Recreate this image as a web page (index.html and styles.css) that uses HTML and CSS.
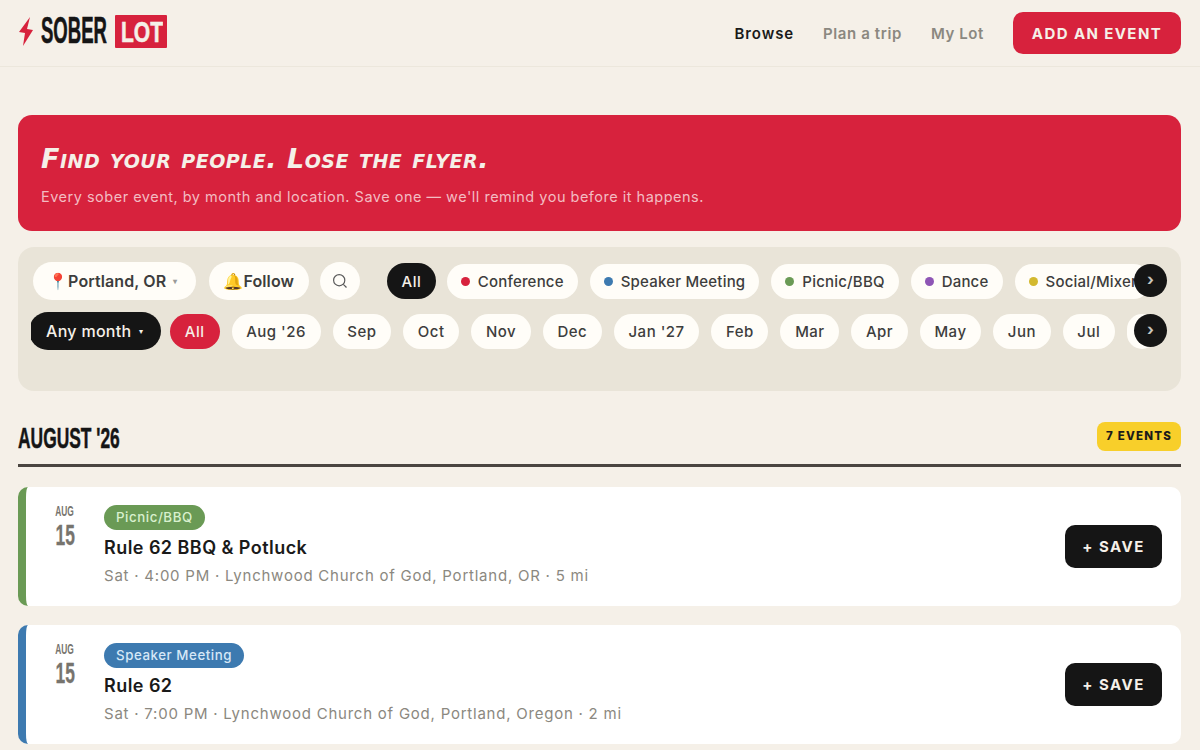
FILE: index.html
```html
<!DOCTYPE html>
<html lang="en">
<head>
    <meta charset="UTF-8">
    <title>Sober Lot</title>
    <link rel="stylesheet" href="styles.css">
</head>
<body>
    <header class="topbar">
        <a class="logo">
            <svg class="bolt" width="16" height="30" viewBox="0 0 16 30"><path d="M12 1 L1 16 L7 17 L5 30 L15 14 L9 13 Z" fill="#d7223d"/></svg>
            <span class="logo-word"><span>SOBER</span></span>
            <span class="logo-box"><span>LOT</span></span>
        </a>
        <nav class="nav">
            <a class="active">Browse</a>
            <a>Plan a trip</a>
            <a>My Lot</a>
            <button class="add-btn">ADD AN EVENT</button>
        </nav>
    </header>

    <main class="page">
        <section class="hero">
            <h1>Find your people. Lose the flyer.</h1>
            <p>Every sober event, by month and location. Save one — we'll remind you before it happens.</p>
        </section>

        <section class="filters">
            <div class="filter-row">
                <div class="chips">
                    <span class="chip big place">📍Portland, OR <i class="caret">▾</i></span>
                    <span class="chip big follow">🔔Follow</span>
                    <span class="chip round">
                        <svg width="16" height="16" viewBox="0 0 16 16" fill="none" stroke="#5a5a5a" stroke-width="1.2"><circle cx="7.2" cy="7.2" r="5.6"/><path d="M11.3 11.3 L14.5 14.5"/></svg>
                    </span>
                    <span class="chip dark cat-all">All</span>
                    <span class="chip cat"><b class="dot red"></b>Conference</span>
                    <span class="chip cat"><b class="dot blue"></b>Speaker Meeting</span>
                    <span class="chip cat"><b class="dot green"></b>Picnic/BBQ</span>
                    <span class="chip cat"><b class="dot purple"></b>Dance</span>
                    <span class="chip cat"><b class="dot yellow"></b>Social/Mixer</span>
                </div>
                <button class="arrow">›</button>
            </div>
            <div class="filter-row">
                <div class="chips months">
                    <span class="chip dark any">Any month <i class="caret">▾</i></span>
                    <span class="chip red-chip">All</span>
                    <span class="chip">Aug '26</span>
                    <span class="chip">Sep</span>
                    <span class="chip">Oct</span>
                    <span class="chip">Nov</span>
                    <span class="chip">Dec</span>
                    <span class="chip">Jan '27</span>
                    <span class="chip">Feb</span>
                    <span class="chip">Mar</span>
                    <span class="chip">Apr</span>
                    <span class="chip">May</span>
                    <span class="chip">Jun</span>
                    <span class="chip">Jul</span>
                    <span class="chip stub"></span>
                </div>
                <button class="arrow">›</button>
            </div>
        </section>

        <div class="month-head">
            <h2><span>AUGUST '26</span></h2>
            <span class="count">7 EVENTS</span>
        </div>

        <article class="event green-edge">
            <div class="date"><span class="mon">AUG</span><span class="day">15</span></div>
            <div class="info">
                <span class="tag tag-green">Picnic/BBQ</span>
                <h3>Rule 62 BBQ &amp; Potluck</h3>
                <p>Sat · 4:00 PM · Lynchwood Church of God, Portland, OR · 5 mi</p>
            </div>
            <button class="save">+ SAVE</button>
        </article>

        <article class="event blue-edge">
            <div class="date"><span class="mon">AUG</span><span class="day">15</span></div>
            <div class="info">
                <span class="tag tag-blue">Speaker Meeting</span>
                <h3>Rule 62</h3>
                <p>Sat · 7:00 PM · Lynchwood Church of God, Portland, Oregon · 2 mi</p>
            </div>
            <button class="save">+ SAVE</button>
        </article>
    </main>
</body>
</html>
```

FILE: styles.css
```css
html, body {
    margin: 0;
    padding: 0;
    background: #f5f0e8;
    font-family: Inter, "Liberation Sans", sans-serif;
    color: #1a1a1a;
    height: 750px;
    overflow: hidden;
}
.topbar {
    display: flex;
    justify-content: space-between;
    align-items: center;
    height: 66px;
    padding: 0 19px 0 18px;
    border-bottom: 1px solid #ece7dc;
}
.logo {
    display: flex;
    align-items: center;
    height: 34px;
    margin-top: -4px;
}
.bolt {
    margin-right: 7px;
}
.logo-word, .logo-box {
    display: block;
    font-family: "Liberation Sans", sans-serif;
    font-weight: 700;
    font-size: 36px;
    line-height: 34px;
    -webkit-text-stroke: 0.6px currentColor;
}
.logo-word span, .logo-box span, .month-head h2 span {
    display: inline-block;
    white-space: nowrap;
    transform-origin: left center;
}
.logo-word {
    width: 68px;
    color: #151515;
    margin-right: 6px;
}
.logo-word span {
    transform: scaleX(0.515);
}
.logo-box {
    background: #d7223d;
    color: #f5f0e8;
    width: 52px;
    height: 33px;
    padding-left: 6px;
    box-sizing: border-box;
    font-size: 30px;
    line-height: 34px;
    border-radius: 1px;
}
.logo-box span {
    transform: scaleX(0.7);
}
.nav {
    display: flex;
    align-items: center;
    font-size: 15px;
    font-weight: 600;
    letter-spacing: 0.6px;
    color: #8b8880;
}
.nav a {
    margin-right: 29px;
}
.nav a.active {
    color: #1a1a1a;
    letter-spacing: 0.9px;
}
.add-btn {
    background: #d7223d;
    color: #f5f0e8;
    border: none;
    border-radius: 10px;
    height: 42px;
    width: 168px;
    font-family: inherit;
    font-size: 15px;
    font-weight: 700;
    letter-spacing: 1.4px;
}
.page {
    padding: 48px 19px 0 18px;
}
.hero {
    background: #d7223d;
    border-radius: 14px;
    height: 116px;
    padding: 28px 23px 0;
    box-sizing: border-box;
    color: #f5f0e8;
}
.hero h1 {
    margin: 0;
    font-family: "DejaVu Sans", sans-serif;
    font-style: italic;
    font-variant: small-caps;
    font-size: 27px;
    line-height: 32px;
    font-weight: 700;
    letter-spacing: 0.5px;
}
.hero p {
    margin: 12px 0 0;
    font-size: 14.5px;
    line-height: 20px;
    letter-spacing: 0.5px;
    color: #f3bcc2;
}
.filters {
    margin-top: 16px;
    background: #e9e4d8;
    border-radius: 16px;
    height: 144px;
    padding: 15px 13px 0 13px;
    box-sizing: border-box;
}
.filter-row {
    position: relative;
    height: 38px;
    margin-bottom: 12px;
}
.chips {
    display: flex;
    align-items: center;
    gap: 12px;
    height: 38px;
    overflow: hidden;
    width: 1136px;
}
.chip {
    flex: none;
    display: flex;
    align-items: center;
    box-sizing: border-box;
    height: 35px;
    padding: 0 14.65px;
    background: #fffdf8;
    border-radius: 18px;
    font-size: 15px;
    font-weight: 500;
    color: #3d3d3d;
    white-space: nowrap;
    letter-spacing: 0.5px;
}
.chip.stub {
    width: 30px;
}
.chip.cat {
    font-size: 15px;
    letter-spacing: 0.2px;
    padding: 0 14px;
}
.chip.big {
    height: 38px;
    border-radius: 19px;
    font-size: 16px;
    font-weight: 600;
    letter-spacing: 0.1px;
}
.chip.place {
    margin-left: 2px;
    padding: 0 19px 0 15px;
}
.chip.follow {
    margin-left: 1px;
    padding: 0 15px 0 14px;
}
.chip.round {
    width: 40px;
    height: 38px;
    margin-left: -1px;
    border-radius: 50%;
    justify-content: center;
    padding: 0;
}
.chip.dark {
    background: #151515;
    color: #f5f0e8;
}
.cat-all {
    margin-left: 15px;
    margin-right: -1px;
    height: 36px;
    border-radius: 18px;
    padding: 0 14.5px;
}
.chip.any {
    height: 38px;
    border-radius: 19px;
    font-size: 16px;
    letter-spacing: 0.3px;
    padding: 0 17px;
    margin-left: -2px;
    margin-right: -3px;
}
.chip.red-chip {
    background: #d7223d;
    color: #f5f0e8;
    padding: 0 15px;
}
.caret {
    font-style: normal;
    font-size: 8px;
    margin-left: 7px;
    color: #9a9a9a;
}
.any .caret {
    color: #f5f0e8;
    margin-left: 8px;
}
.dot {
    width: 9px;
    height: 9px;
    border-radius: 50%;
    margin-right: 8px;
}
.dot.red { background: #d7223d; }
.dot.blue { background: #3d7ab0; }
.dot.green { background: #6a9a55; }
.dot.purple { background: #8e55b5; }
.dot.yellow { background: #d3b92f; }
.arrow {
    position: absolute;
    right: 1px;
    top: 2px;
    width: 33px;
    height: 33px;
    border: none;
    border-radius: 50%;
    background: #151515;
    color: #c9c6bf;
    font-family: inherit;
    font-size: 16px;
    font-weight: 700;
    line-height: 28px;
    padding: 0 0 3px;
}
.month-head {
    display: flex;
    justify-content: space-between;
    align-items: center;
    margin-top: 31px;
    height: 42px;
    border-bottom: 3px solid #4a4540;
}
.month-head h2 {
    margin: 0;
    font-family: "Liberation Sans", sans-serif;
    font-size: 29px;
    font-weight: 700;
    color: #151515;
    -webkit-text-stroke: 0.5px currentColor;
    margin-top: -10px;
}
.month-head h2 span {
    transform: scaleX(0.6);
}
.count {
    background: #f8cf2a;
    border-radius: 8px;
    height: 29px;
    line-height: 29px;
    padding: 0 9px;
    font-size: 11.5px;
    font-weight: 800;
    letter-spacing: 1.2px;
    margin-top: -14px;
}
.event {
    display: flex;
    align-items: center;
    background: #fff;
    border-radius: 10px;
    height: 119px;
    margin-top: 19px;
    border-left: 8px solid;
    box-sizing: border-box;
    padding: 0 19px 0 0;
}
.month-head + .event {
    margin-top: 20px;
}
.green-edge { border-left-color: #6a9a55; }
.blue-edge { border-left-color: #3d7ab0; }
.date {
    width: 78px;
    display: flex;
    flex-direction: column;
    align-items: center;
    margin-top: -39px;
    color: #77746e;
    font-family: "Liberation Sans", sans-serif;
    font-weight: 700;
}
.mon, .day {
    display: block;
    transform: scaleX(0.6);
}
.mon {
    font-size: 14px;
    line-height: 14px;
    margin-bottom: 2px;
}
.day {
    font-size: 29px;
    line-height: 31px;
    -webkit-text-stroke: 0.3px currentColor;
}
.info {
    flex: 1;
    margin-top: -2px;
}
.tag {
    display: inline-block;
    height: 25px;
    line-height: 25px;
    padding: 0 12px;
    border-radius: 13px;
    color: #d8f0cd;
    font-size: 13.3px;
    font-weight: 500;
    letter-spacing: 0.55px;
}
.tag-green { background: #6a9a55; }
.tag-blue { background: #3d7ab0; color: #d6e8f7; }
.info h3 {
    margin: 5px 0 0;
    font-size: 18px;
    line-height: 26px;
    font-weight: 600;
    letter-spacing: 0.45px;
    color: #1a1a1a;
}
.info p {
    margin: 5px 0 0;
    font-size: 15px;
    line-height: 20px;
    letter-spacing: 0.77px;
    color: #8b8880;
}
.save {
    width: 97px;
    height: 43px;
    background: #151515;
    color: #f5f0e8;
    border: none;
    border-radius: 10px;
    font-family: inherit;
    font-size: 15px;
    font-weight: 700;
    letter-spacing: 1.5px;
}
```
